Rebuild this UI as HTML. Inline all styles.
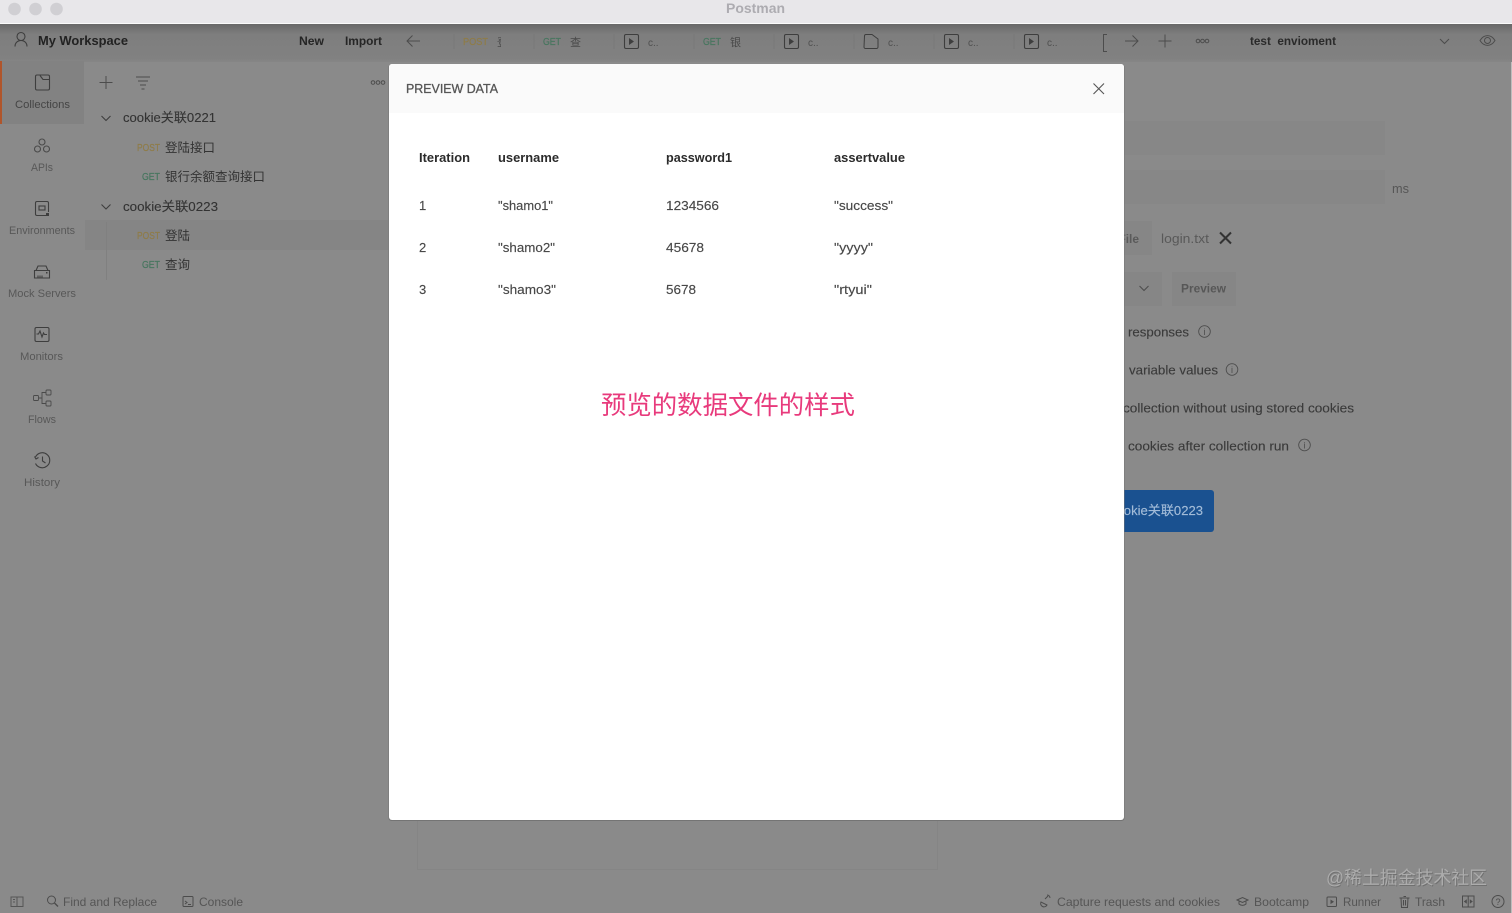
<!DOCTYPE html>
<html lang="zh"><head><meta charset="utf-8"><title>Postman</title>
<style>
html,body{margin:0;padding:0;width:1512px;height:913px;overflow:hidden;background:#8a8a8a}
svg{display:block;filter:blur(.3px)}
text{font-family:"Liberation Sans","Noto Sans CJK SC",sans-serif;white-space:pre}
.s{font-size:11px;fill:#585858}
.b{font-weight:bold}
.i{fill:none;stroke:#3e3e3e;stroke-width:1.1}
.l{fill:none;stroke:#4c4c4c;stroke-width:1}
.f{font-size:13px;fill:#333;stroke:#333;stroke-width:.12}
.r{font-size:13px;fill:#3a3a3a;stroke:#3a3a3a;stroke-width:.12}
.st{font-size:12px;fill:#555}
.th{font-size:13px;font-weight:bold;fill:#2b2b2b}
.td{font-size:13px;fill:#484848;stroke:#484848;stroke-width:.15}
.tab{font-size:10px;fill:#4f4f4f}
.po{font-size:10px;fill:#8f7c48;stroke:#8f7c48;stroke-width:.2}
.ge{font-size:10px;fill:#47765f;stroke:#47765f;stroke-width:.2}
</style></head><body>
<svg width="1512" height="913" viewBox="0 0 1512 913" xmlns="http://www.w3.org/2000/svg">
<defs>
<linearGradient id="hd" x1="0" y1="0" x2="0" y2="1"><stop offset="0" stop-color="#686868"/><stop offset=".28" stop-color="#7e7e7e"/><stop offset=".9" stop-color="#818181"/><stop offset="1" stop-color="#868686"/></linearGradient>
<clipPath id="c1"><rect x="497" y="30" width="4" height="24"/></clipPath>
</defs>
<rect width="1512" height="913" fill="#8a8a8a"/>
<rect x="1511" y="24" width="1" height="889" fill="#bdbdbd"/>
<!-- title bar -->
<rect width="1512" height="24" fill="#e8e7ea"/>
<rect y="23" width="1512" height="1" fill="#fafafa"/>
<circle cx="14.5" cy="9" r="6.3" fill="#d0cfd3"/><circle cx="35.5" cy="9" r="6.3" fill="#d0cfd3"/><circle cx="56.5" cy="9" r="6.3" fill="#d0cfd3"/>
<text x="726" y="13" font-size="13.5" font-weight="bold" fill="#adacb1" textLength="59" lengthAdjust="spacingAndGlyphs">Postman</text>
<!-- header -->
<rect y="24" width="1512" height="38" fill="url(#hd)"/>
<path class="i" d="M17 36.500a4 4 0 1 0 8 0a4 4 0 1 0 -8 0M15 46.500c0-8 12-8 12 0" stroke-width="1.200"/>
<text x="38" y="45" font-size="13" class="b" fill="#222" textLength="90" lengthAdjust="spacingAndGlyphs">My Workspace</text>
<text x="299" y="45" font-size="12" class="b" fill="#252525" textLength="25" lengthAdjust="spacingAndGlyphs">New</text>
<text x="345" y="45" font-size="12" class="b" fill="#252525" textLength="37" lengthAdjust="spacingAndGlyphs">Import</text>
<path class="l" d="M420 41H407M412.500 35.500L407 41L412.500 46.500"/>
<path d="M454 34v15M534 34v15M614 34v15M694 34v15M774 34v15M854 34v15M934 34v15M1014 34v15" stroke="#787878" stroke-width="1"/>
<text x="463" y="45" class="po" textLength="25" lengthAdjust="spacingAndGlyphs">POST</text>
<g clip-path="url(#c1)"><text x="497" y="46" font-size="11" fill="#4a4a4a">登</text></g>
<text x="543" y="45" class="ge" textLength="18" lengthAdjust="spacingAndGlyphs">GET</text>
<text x="570" y="46" font-size="11" fill="#4a4a4a">查</text>
<text x="703" y="45" class="ge" textLength="18" lengthAdjust="spacingAndGlyphs">GET</text>
<text x="730" y="46" font-size="11" fill="#4a4a4a">银</text>
<g class="i"><rect x="624.500" y="34.500" width="14" height="14" rx="1.500"/><rect x="784.500" y="34.500" width="14" height="14" rx="1.500"/><rect x="944.500" y="34.500" width="14" height="14" rx="1.500"/><rect x="1024.500" y="34.500" width="14" height="14" rx="1.500"/>
<path d="M864.500 36a1.500 1.500 0 0 1 1.500-1.500h6l6 4.500v8a1.500 1.500 0 0 1-1.500 1.500h-11a1.500 1.500 0 0 1-1.500-1.500z" stroke-width="1"/></g>
<path d="M629 38l5 3.500l-5 3.500zM789 38l5 3.500l-5 3.500zM949 38l5 3.500l-5 3.500zM1029 38l5 3.500l-5 3.500z" fill="#3e3e3e"/>
<text x="648" y="46" class="tab">c..</text><text x="808" y="46" class="tab">c..</text><text x="888" y="46" class="tab">c..</text><text x="968" y="46" class="tab">c..</text><text x="1047" y="46" class="tab">c..</text>
<path class="l" d="M1107 34.500h-3.500v17h3.500"/>
<path class="l" d="M1125 41h13M1132.500 35.500L1138 41L1132.500 46.500"/>
<path class="l" d="M1165 34.500v13M1158.500 41h13" stroke-width="1.100"/>
<g class="l"><circle cx="1198" cy="41" r="1.800"/><circle cx="1202.500" cy="41" r="1.800"/><circle cx="1207" cy="41" r="1.800"/></g>
<text x="1250" y="45" font-size="11.500" class="b" fill="#2a2a2a" textLength="86" lengthAdjust="spacingAndGlyphs">test  envioment</text>
<path class="l" d="M1440 39l4.500 4.500l4.500-4.500"/>
<path class="l" d="M1480 40.500c4-6.500 11-6.500 15 0c-4 6.500-11 6.500-15 0z"/><circle class="l" cx="1487.500" cy="40.500" r="3"/>
<!-- sidebar -->
<rect x="0" y="61" width="84" height="63" fill="#828282"/>
<rect x="0" y="61" width="2" height="63" fill="#b0552b"/>
<rect x="85" y="220" width="303" height="30" fill="#858585"/>
<path d="M106.500 222v58" stroke="#808080"/>
<path class="i" d="M35.500 76.500a1.500 1.500 0 0 1 1.500-1.500h11a1.500 1.500 0 0 1 1.500 1.500v12a1.500 1.500 0 0 1-1.500 1.500h-11a1.500 1.500 0 0 1-1.500-1.500zM40 75.500l3 4h6.500" stroke-width="1.200"/>
<text class="s" x="15" y="108" textLength="55" lengthAdjust="spacingAndGlyphs" style="fill:#454545">Collections</text>
<g class="i" style="stroke:#4a4a4a"><circle cx="42" cy="142" r="3"/><circle cx="37.500" cy="149" r="3"/><circle cx="46.500" cy="149" r="3"/></g>
<text class="s" x="31" y="171" textLength="22" lengthAdjust="spacingAndGlyphs">APIs</text>
<path class="i" d="M37 201.500h10a1.500 1.500 0 0 1 1.500 1.500v9M46 215.500h-9a1.500 1.500 0 0 1-1.500-1.500v-11a1.500 1.500 0 0 1 1.500-1.500"/><rect class="i" x="39" y="206" width="6" height="4"/><rect x="46" y="213" width="3" height="3" fill="#3e3e3e"/>
<text class="s" x="9" y="234" textLength="66" lengthAdjust="spacingAndGlyphs">Environments</text>
<path class="i" d="M36 270.500l2-4.500h8l2 4.500M34.500 270.500h15v7.500h-15zM38 278v-2.500M40 278v-2.500M42 278v-2.500"/><rect x="46" y="272" width="1.500" height="1.500" fill="#3e3e3e"/>
<text class="s" x="8" y="297" textLength="68" lengthAdjust="spacingAndGlyphs">Mock Servers</text>
<rect class="i" x="35" y="327.500" width="14" height="14" rx="1.500"/><path class="i" d="M36.500 334h2l1.500-3l2 6l1.500-4l1 1.500h2.500" stroke-width=".9"/>
<text class="s" x="20" y="360" textLength="43" lengthAdjust="spacingAndGlyphs">Monitors</text>
<g class="i" style="stroke-width:.9;stroke:#4a4a4a"><rect x="33.500" y="395.500" width="5" height="5" rx="1"/><rect x="46" y="390" width="5" height="5" rx="1"/><rect x="46" y="401" width="5" height="5" rx="1"/><path d="M38.500 398h3.500M42 398v-5.500h4M42 398v5.500h4"/></g>
<text class="s" x="28" y="423" textLength="28" lengthAdjust="spacingAndGlyphs">Flows</text>
<path class="i" d="M35.500 457a7.500 7.500 0 1 1 0 6.500M34.500 456.500l1.500 2.500l2.500-1.500M42.500 456.500v4.500l3 2"/>
<text class="s" x="24" y="486" textLength="36" lengthAdjust="spacingAndGlyphs">History</text>
<!-- collections panel -->
<path class="l" d="M106 76v13M99.500 82.500h13" stroke-width="1.100"/>
<path class="l" d="M136 77h14M138 81h10M140 85h6M141.500 89h3"/>
<g class="l"><circle cx="373" cy="82.500" r="1.800"/><circle cx="378" cy="82.500" r="1.800"/><circle cx="383" cy="82.500" r="1.800"/></g>
<path class="i" d="M101.500 116l4.500 4.500l4.500-4.500M101.500 204.500l4.500 4.500l4.500-4.500"/>
<text class="f" x="123" y="122" textLength="93" lengthAdjust="spacingAndGlyphs">cookie关联0221</text>
<text class="f" x="123" y="211" textLength="95" lengthAdjust="spacingAndGlyphs">cookie关联0223</text>
<text x="137" y="151" class="po" textLength="23" lengthAdjust="spacingAndGlyphs">POST</text>
<text x="142" y="180" class="ge" textLength="18" lengthAdjust="spacingAndGlyphs">GET</text>
<text x="137" y="239" class="po" textLength="23" lengthAdjust="spacingAndGlyphs">POST</text>
<text x="142" y="268" class="ge" textLength="18" lengthAdjust="spacingAndGlyphs">GET</text>
<text x="165" y="152" font-size="12.500" fill="#333">登陆接口</text>
<text x="165" y="181" font-size="12.500" fill="#333">银行余额查询接口</text>
<text x="165" y="240" font-size="12.500" fill="#333">登陆</text>
<text x="165" y="269" font-size="12.500" fill="#333">查询</text>
<!-- right panel behind modal -->
<rect x="1100" y="121" width="285" height="34" fill="#878787"/>
<rect x="1100" y="170" width="285" height="34" fill="#878787"/>
<text x="1392" y="193" font-size="13" fill="#565656" textLength="17" lengthAdjust="spacingAndGlyphs">ms</text>
<rect x="1100" y="221" width="52" height="34" fill="#868686"/>
<text x="1080" y="243" font-size="12" class="b" fill="#5a5a5a" textLength="59" lengthAdjust="spacingAndGlyphs">Select File</text>
<text x="1161" y="243" font-size="13" fill="#595959" textLength="48" lengthAdjust="spacingAndGlyphs">login.txt</text>
<path d="M1220 232.500l11 11M1231 232.500l-11 11" stroke="#333" stroke-width="2" fill="none"/>
<rect x="1100" y="272" width="62" height="34" fill="#868686"/>
<path class="l" d="M1139.500 286l4.500 4.500l4.500-4.500"/>
<rect x="1172" y="272" width="64" height="34" fill="#868686"/>
<text x="1181" y="292.500" font-size="12" class="b" fill="#575757" textLength="45" lengthAdjust="spacingAndGlyphs">Preview</text>
<text x="1128" y="336.500" class="r" textLength="61" lengthAdjust="spacingAndGlyphs">responses</text>
<text x="1129" y="374.500" class="r" textLength="89" lengthAdjust="spacingAndGlyphs">variable values</text>
<text x="1123" y="412.500" class="r" textLength="231" lengthAdjust="spacingAndGlyphs">collection without using stored cookies</text>
<text x="1128" y="450.500" class="r" textLength="161" lengthAdjust="spacingAndGlyphs">cookies after collection run</text>
<g class="l" style="stroke-width:.9"><circle cx="1204.500" cy="331.500" r="5.800"/><circle cx="1232" cy="369.500" r="5.800"/><circle cx="1304.500" cy="445" r="5.800"/></g>
<text x="1204.500" y="335" font-size="9" fill="#4c4c4c" text-anchor="middle">i</text><text x="1232" y="373" font-size="9" fill="#4c4c4c" text-anchor="middle">i</text><text x="1304.500" y="448.500" font-size="9" fill="#4c4c4c" text-anchor="middle">i</text>
<rect x="1090" y="490" width="124" height="42" rx="3" fill="#1a5190"/>
<text x="1110" y="515" font-size="13" fill="#a3bcd8" stroke="#a3bcd8" stroke-width=".15" textLength="93" lengthAdjust="spacingAndGlyphs">cookie关联0223</text>
<rect x="417.500" y="820" width="520" height="49.500" fill="none" stroke="#858585"/>
<!-- modal -->
<rect x="388.500" y="64" width="736" height="757" rx="3" fill="#747474"/>
<rect x="389" y="64" width="735" height="756" rx="3" fill="#ffffff"/>
<path d="M389 113V67a3 3 0 0 1 3-3h729a3 3 0 0 1 3 3v46z" fill="#fafafa"/>
<text x="406" y="93" font-size="12.500" fill="#565656" textLength="92" lengthAdjust="spacingAndGlyphs" stroke="#565656" stroke-width=".3">PREVIEW DATA</text>
<path d="M1093.500 83.500l10.500 10.500M1104 83.500l-10.500 10.500" stroke="#555" stroke-width="1.100" fill="none"/>
<text class="th" x="419" y="162" textLength="51" lengthAdjust="spacingAndGlyphs">Iteration</text>
<text class="th" x="498" y="162" textLength="61" lengthAdjust="spacingAndGlyphs">username</text>
<text class="th" x="666" y="162" textLength="66" lengthAdjust="spacingAndGlyphs">password1</text>
<text class="th" x="834" y="162" textLength="71" lengthAdjust="spacingAndGlyphs">assertvalue</text>
<text class="td" x="419" y="210">1</text>
<text class="td" x="498" y="210" textLength="55" lengthAdjust="spacingAndGlyphs">"shamo1"</text>
<text class="td" x="666" y="210" textLength="53" lengthAdjust="spacingAndGlyphs">1234566</text>
<text class="td" x="834" y="210" textLength="59" lengthAdjust="spacingAndGlyphs">"success"</text>
<text class="td" x="419" y="252">2</text>
<text class="td" x="498" y="252" textLength="57" lengthAdjust="spacingAndGlyphs">"shamo2"</text>
<text class="td" x="666" y="252" textLength="38" lengthAdjust="spacingAndGlyphs">45678</text>
<text class="td" x="834" y="252" textLength="39" lengthAdjust="spacingAndGlyphs">"yyyy"</text>
<text class="td" x="419" y="294">3</text>
<text class="td" x="498" y="294" textLength="58" lengthAdjust="spacingAndGlyphs">"shamo3"</text>
<text class="td" x="666" y="294" textLength="30" lengthAdjust="spacingAndGlyphs">5678</text>
<text class="td" x="834" y="294" textLength="38" lengthAdjust="spacingAndGlyphs">"rtyui"</text>
<text x="601" y="414" font-size="25.400" fill="#e83a7c" style="font-family:'Noto Sans CJK SC',sans-serif">预览的数据文件的样式</text>
<!-- status bar -->
<g class="l" style="stroke:#555"><rect x="11" y="897" width="12" height="9.500"/><path d="M17 897v9.500M13 899.500h2M13 902h2"/></g>
<circle class="l" cx="51.500" cy="900" r="4"/><path d="M54.500 903l3.500 3.500" stroke="#4c4c4c" stroke-width="1.400"/>
<text class="st" x="63" y="906" textLength="94" lengthAdjust="spacingAndGlyphs">Find and Replace</text>
<rect class="l" x="183" y="896.500" width="10" height="10" rx="1"/><path class="l" d="M185 901l2 1.500l-2 1.500M188 904.500h3" stroke-width=".8"/>
<text class="st" x="199" y="906" textLength="44" lengthAdjust="spacingAndGlyphs">Console</text>
<path class="l" d="M1041 902a3 3 0 1 0 6 3zM1045 899l3-3M1047 895a3 3 0 0 1 3 3" stroke-width=".9"/>
<text class="st" x="1057" y="906" textLength="163" lengthAdjust="spacingAndGlyphs">Capture requests and cookies</text>
<path class="l" d="M1237 900l5.500-2.500l5.500 2.500l-5.500 2.500zM1239 901.500v2.500c2 1.800 5 1.800 7 0v-2.500"/>
<text class="st" x="1254" y="906" textLength="55" lengthAdjust="spacingAndGlyphs">Bootcamp</text>
<rect class="l" x="1327" y="897" width="9.500" height="9.500" rx="1"/><path d="M1330.500 899.500l3.500 2.300l-3.500 2.300z" fill="#4c4c4c"/>
<text class="st" x="1343" y="906" textLength="38" lengthAdjust="spacingAndGlyphs">Runner</text>
<path class="l" d="M1399.500 898h10M1401 898l.5 9.500h6l.5-9.500M1403.500 896.500h2.500M1403.500 900v5.500M1405.500 900v5.500" stroke-width=".9"/>
<text class="st" x="1415" y="906" textLength="30" lengthAdjust="spacingAndGlyphs">Trash</text>
<rect class="l" x="1462.500" y="896" width="11.500" height="11"/><path class="l" d="M1468.200 896v11"/><path d="M1463.800 901.500l3-2.200v4.400zM1472.800 901.500l-3-2.200v4.400z" fill="#4c4c4c"/>
<circle class="l" cx="1498" cy="901.500" r="6"/><text x="1498" y="905" font-size="9" fill="#4c4c4c" text-anchor="middle">?</text>
<text x="1326" y="884" font-size="18" fill="#707070" transform="translate(.8,1)" textLength="161" lengthAdjust="spacingAndGlyphs">@稀土掘金技术社区</text>
<text x="1326" y="884" font-size="18" fill="#acacac" textLength="161" lengthAdjust="spacingAndGlyphs">@稀土掘金技术社区</text>
</svg>
</body></html>
